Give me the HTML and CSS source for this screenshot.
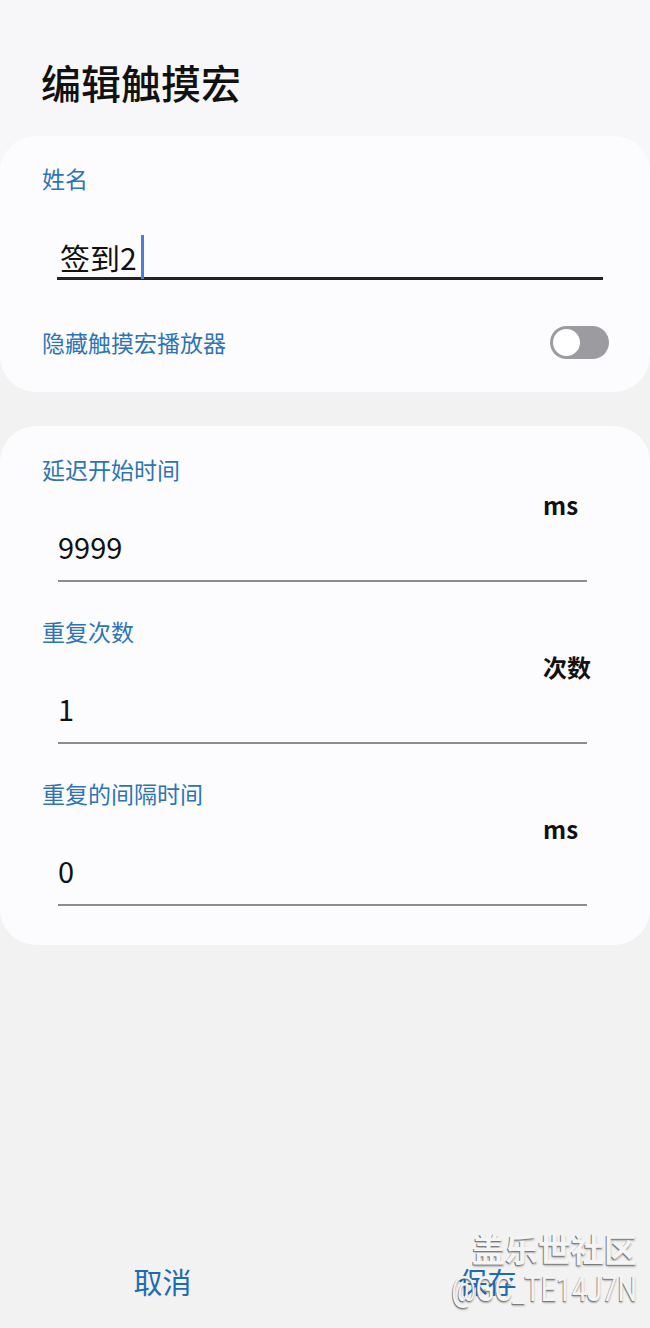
FILE: index.html
```html
<!DOCTYPE html>
<html lang="zh-CN">
<head>
<meta charset="utf-8">
<title>编辑触摸宏</title>
<link rel="stylesheet" href="styles.css">
</head>
<body>
<div class="page">
  <div class="top">
    <h1 class="title">编辑触摸宏</h1>
    <section class="card card-name">
      <div class="label">姓名</div>
      <div class="name-field">
        <span class="name-text">签到2</span><span class="cursor"></span>
      </div>
      <div class="toggle-row">
        <span class="label">隐藏触摸宏播放器</span>
        <span class="toggle"><span class="knob"></span></span>
      </div>
    </section>
  </div>

  <section class="card card-params">
    <div class="group">
      <div class="label">延迟开始时间</div>
      <div class="field">
        <div class="unit">ms</div>
        <div class="value">9999</div>
      </div>
    </div>
    <div class="group">
      <div class="label">重复次数</div>
      <div class="field">
        <div class="unit">次数</div>
        <div class="value">1</div>
      </div>
    </div>
    <div class="group">
      <div class="label">重复的间隔时间</div>
      <div class="field">
        <div class="unit">ms</div>
        <div class="value">0</div>
      </div>
    </div>
  </section>

  <div class="actions">
    <button class="action">取消</button>
    <button class="action">保存</button>
  </div>

  <div class="watermark">
    <div class="wm-cn">盖乐世社区</div>
    <div class="wm-id">@GC_TE14J7N</div>
  </div>
</div>
</body>
</html>
```

FILE: styles.css
```css
* { box-sizing: border-box; }

html, body {
  margin: 0;
  padding: 0;
}

body {
  background: #f2f2f2;
  font-family: "Noto Sans CJK SC", "Noto Sans", sans-serif;
  color: #111;
}

.page {
  position: relative;
  height: 1328px;
  display: flex;
  flex-direction: column;
  overflow: hidden;
}

.top {
  background: linear-gradient(to bottom, #f7f7f9 0, #f7f7f9 200px, #f2f2f2 200px);
}

.title {
  margin: 0;
  padding: 56px 0 0 41px;
  height: 136px;
  font-size: 40px;
  line-height: 52px;
  font-weight: 500;
  color: #111;
}

.card {
  background: #fcfcfe;
  border-radius: 36px;
}

.label {
  font-size: 23px;
  line-height: 28px;
  color: #2e74b5;
}

.card-name {
  padding: 28px 41px 18px 42px;
}

.name-field {
  display: flex;
  margin: 45px 6px 0 15px;
  padding-left: 3px;
  height: 43px;
  border-bottom: 3px solid #222;
}

.name-text {
  font-size: 30px;
  line-height: 40px;
  color: #111;
}

.cursor {
  width: 3px;
  margin: -2px 0 -2px 4px;
  background: #4a7fd3;
}

.toggle-row {
  margin-top: 30px;
  height: 64px;
  display: flex;
  align-items: center;
  justify-content: space-between;
}

.toggle {
  width: 59px;
  height: 33px;
  padding: 3px;
  border-radius: 17px;
  background: #9b9ba0;
  display: flex;
  align-items: center;
}

.knob {
  width: 27px;
  height: 27px;
  border-radius: 50%;
  background: #fff;
}

.card-params {
  margin-top: 34px;
  padding: 29px 41px 39px 42px;
}

.group + .group {
  margin-top: 35px;
}

.field {
  margin: 8px 22px 0 16px;
  padding-bottom: 14px;
  border-bottom: 2px solid #8c8c8c;
}

.unit {
  margin-left: calc(100% - 44px);
  font-size: 24px;
  line-height: 28px;
  font-weight: 700;
  color: #111;
  white-space: nowrap;
}

.value {
  margin-top: 7px;
  font-size: 29px;
  line-height: 40px;
  color: #111;
}

.actions {
  margin-top: auto;
  height: 94px;
  display: flex;
  align-items: center;
}

.action {
  flex: 1;
  border: 0;
  background: none;
  padding: 0;
  font-family: "Noto Sans CJK SC", "Noto Sans", sans-serif;
  font-size: 29px;
  line-height: 40px;
  color: #1f6bb3;
}

.watermark {
  position: absolute;
  right: 13px;
  top: 1226px;
  text-align: right;
  color: #f4f4f4;
  text-shadow: -1px 1px 0 #7d7d7d, 0 2px 2px rgba(0, 0, 0, 0.3);
  pointer-events: none;
}

.wm-cn {
  font-size: 33px;
  line-height: 44px;
  font-weight: 700;
}

.wm-id {
  font-family: Roboto, "Liberation Sans", sans-serif;
  font-size: 35px;
  line-height: 40px;
  transform: scaleX(0.78);
  transform-origin: right center;
  white-space: nowrap;
}
```
